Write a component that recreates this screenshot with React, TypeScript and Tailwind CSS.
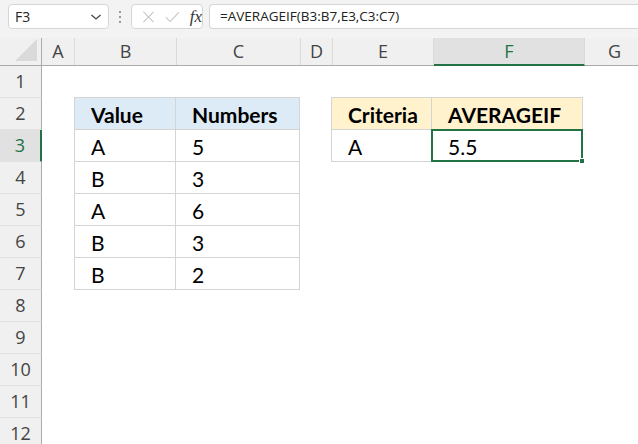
import React from "react";

// column widths in px, A..G
const cols = ["A", "B", "C", "D", "E", "F", "G"];

const colClass: Record<string, string> = {
  A: "w-[33px]",
  B: "w-[102px]",
  C: "w-[124px]",
  D: "w-[32px]",
  E: "w-[101px]",
  F: "w-[151px]",
  G: "w-[60px]",
};

type Cell = { text: string; bold?: boolean; bg?: string };

// sheet contents, keyed by row then column
const data: Record<number, Record<string, Cell>> = {
  2: {
    B: { text: "Value", bold: true, bg: "bg-[#ddebf7]" },
    C: { text: "Numbers", bold: true, bg: "bg-[#ddebf7]" },
    E: { text: "Criteria", bold: true, bg: "bg-[#fff2cc]" },
    F: { text: "AVERAGEIF", bold: true, bg: "bg-[#fff2cc]" },
  },
  3: { B: { text: "A" }, C: { text: "5" }, E: { text: "A" }, F: { text: "5.5" } },
  4: { B: { text: "B" }, C: { text: "3" } },
  5: { B: { text: "A" }, C: { text: "6" } },
  6: { B: { text: "B" }, C: { text: "3" } },
  7: { B: { text: "B" }, C: { text: "2" } },
};

function FormulaBar() {
  return (
    <div className="h-[38px] bg-[#f3f3f3] flex items-start pt-[4px] pl-[8px]">
      {/* Name box */}
      <div className="w-[101px] h-[25px] bg-white border border-[#d6d6d6] rounded-[4px] flex items-center justify-between pl-[6px] pr-[6px]">
        <span className="text-[14px] text-[#222]">F3</span>
        <svg width="12" height="8" viewBox="0 0 12 8">
          <path d="M1.5 2 L6 6 L10.5 2" fill="none" stroke="#444" strokeWidth="1.3" />
        </svg>
      </div>
      {/* vertical dots */}
      <div className="w-[22px] h-[25px] flex flex-col items-center justify-center gap-[3px]">
        <span className="w-[2px] h-[2px] bg-[#9a9a9a]" />
        <span className="w-[2px] h-[2px] bg-[#9a9a9a]" />
        <span className="w-[2px] h-[2px] bg-[#9a9a9a]" />
      </div>
      {/* cancel / enter / fx */}
      <div className="w-[72px] h-[25px] bg-white border border-[#d6d6d6] rounded-[4px] flex items-center pl-[10px] gap-[10px]">
        <svg width="14" height="14" viewBox="0 0 14 14">
          <path d="M1.5 1.5 L12.5 12.5 M12.5 1.5 L1.5 12.5" stroke="#c4c4c4" strokeWidth="1.1" />
        </svg>
        <svg width="16" height="14" viewBox="0 0 16 14">
          <path d="M1 7.5 L5.5 12 L15 2" fill="none" stroke="#c4c4c4" strokeWidth="1.1" />
        </svg>
        <span className="text-[17px] italic text-[#333] leading-none" style={{ fontFamily: '"Liberation Serif", serif' }}>
          fx
        </span>
      </div>
      {/* formula input */}
      <div className="ml-[6px] flex-1 h-[25px] bg-white border border-[#d6d6d6] rounded-l-[4px] border-r-0 flex items-center pl-[10px]">
        <span className="text-[13.5px] text-[#222]">=AVERAGEIF(B3:B7,E3,C3:C7)</span>
      </div>
    </div>
  );
}

function ColumnHeaders() {
  return (
    <div className="flex h-[28px] bg-[#f0f0f0] border-b border-[#ababab]">
      <div className="w-[42px] shrink-0 border-r border-[#ababab] relative">
        <svg className="absolute right-[4px] bottom-[4px]" width="22" height="22" viewBox="0 0 22 22">
          <path d="M22 0 L22 22 L0 22 Z" fill="#dadada" />
        </svg>
      </div>
      {cols.map((c) => {
        const sel = c === "F";
        return (
          <div
            key={c}
            className={`${colClass[c]} shrink-0 flex items-center justify-center text-[18px] border-r border-[#dadada] ${
              sel ? "bg-[#e1e1e1] text-[#217346] border-b-2 border-b-[#217346] -mb-px" : "text-[#444]"
            }`}
          >
            {c}
          </div>
        );
      })}
    </div>
  );
}

function Row({ n }: { n: number }) {
  const rowData = data[n] || {};
  const selRow = n === 3;
  return (
    <div className="flex h-[32px]">
      <div
        className={`w-[42px] shrink-0 flex items-center justify-center text-[18px] border-b border-[#e2e2e2] ${
          selRow
            ? "bg-[#e1e1e1] text-[#217346] border-r-2 border-r-[#217346]"
            : "bg-[#f0f0f0] text-[#444] border-r border-r-[#ababab]"
        }`}
      >
        {n}
      </div>
      {cols.map((c) => {
        const cell = rowData[c];
        const isSel = n === 3 && c === "F";
        const leftEdge = c === "B" || c === "E";
        const topEdge = n === 2;
        return (
          <div
            key={c}
            className={`${colClass[c]} shrink-0 relative flex items-center ${
              cell ? "border-r border-b border-[#d4d4d4]" : ""
            } ${cell && leftEdge ? "border-l -ml-px" : ""} ${cell && topEdge ? "border-t -mt-px h-[33px]" : "h-[32px]"} ${
              cell?.bg ?? ""
            }`}
          >
            {cell && (
              <span
                className={`pl-[16px] pt-[2px] text-[21px] text-black ${cell.bold ? "font-bold" : ""}`}
                style={{ fontFamily: "Lato, sans-serif" }}
              >
                {cell.text}
              </span>
            )}
            {isSel && (
              <>
                <div className="absolute -left-px -top-px -right-px -bottom-px border-2 border-[#217346] pointer-events-none" />
                <div className="absolute -right-[3px] -bottom-[3px] w-[6px] h-[6px] bg-[#217346] border border-white" />
              </>
            )}
          </div>
        );
      })}
    </div>
  );
}

export default function App() {
  const rows = Array.from({ length: 12 }, (_, i) => i + 1);
  return (
    <div
      className="w-[638px] h-[444px] overflow-hidden bg-white"
      style={{ fontFamily: '"Open Sans", "Noto Sans", sans-serif' }}
    >
      <FormulaBar />
      <ColumnHeaders />
      {rows.map((n) => (
        <Row key={n} n={n} />
      ))}
    </div>
  );
}
